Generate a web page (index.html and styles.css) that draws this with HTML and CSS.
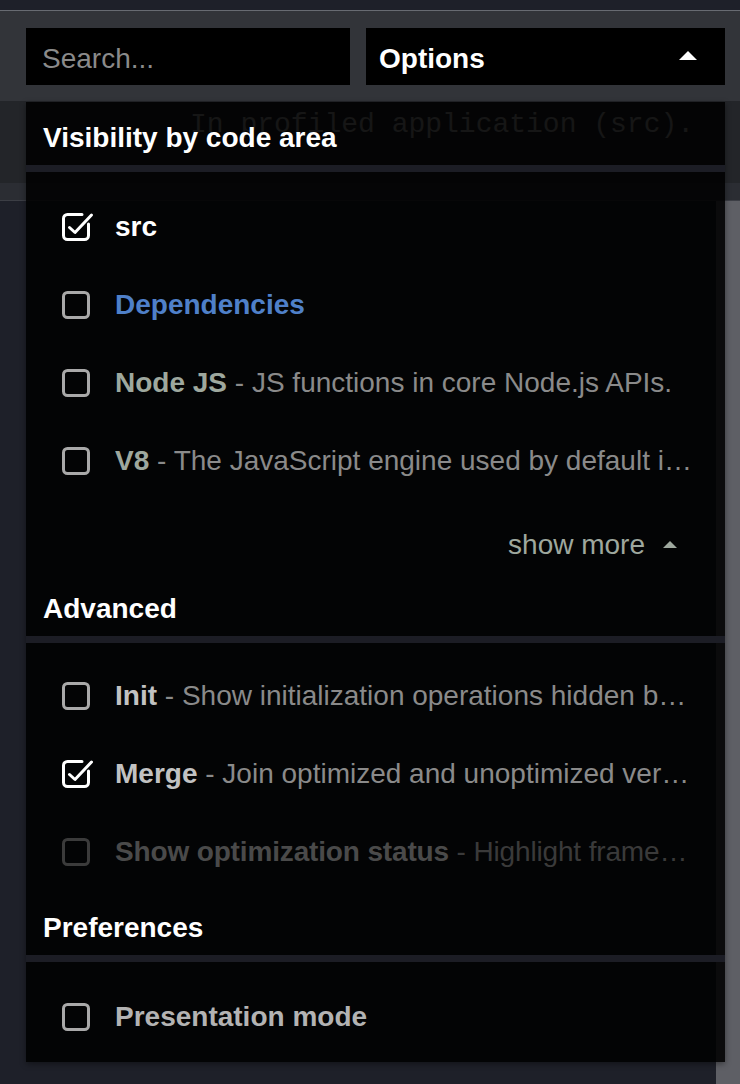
FILE: index.html
```html
<!DOCTYPE html>
<html>
<head>
<meta charset="utf-8">
<link rel="stylesheet" href="styles.css">
</head>
<body>
<div class="page">
  <div class="topstrip"></div>
  <div class="toolbar">
    <input class="search" type="text" placeholder="Search...">
    <button class="options-btn"><span>Options</span><span class="tri-up"></span></button>
  </div>
  <div class="infobar">
    <span class="info-text">In profiled application (src).</span>
  </div>
  <div class="subbar"></div>
  <div class="main">
    <div class="content"></div>
    <div class="scrollbar"></div>
  </div>

  <div class="panel">
    <div class="sec-title">Visibility by code area</div>
    <div class="sec-body first">
      <div class="row">
        <svg class="cb" width="28" height="28" viewBox="0 0 28 28"><path class="on" d="M20 1.5H5.5A4 4 0 0 0 1.5 5.5V22.5A4 4 0 0 0 5.5 26.5H22.5A4 4 0 0 0 26.5 22.5V11"/><path class="on" d="M7.5 14.5L13 19.5L29.5 2"/></svg>
        <span class="label"><b class="c-white">src</b></span>
      </div>
      <div class="row">
        <svg class="cb" width="28" height="28" viewBox="0 0 28 28"><rect class="off" x="1.5" y="1.5" width="25" height="25" rx="4"/></svg>
        <span class="label"><b class="c-blue">Dependencies</b></span>
      </div>
      <div class="row">
        <svg class="cb" width="28" height="28" viewBox="0 0 28 28"><rect class="off" x="1.5" y="1.5" width="25" height="25" rx="4"/></svg>
        <span class="label"><b class="c-green">Node JS</b><span class="desc"> - JS functions in core Node.js APIs.</span></span>
      </div>
      <div class="row">
        <svg class="cb" width="28" height="28" viewBox="0 0 28 28"><rect class="off" x="1.5" y="1.5" width="25" height="25" rx="4"/></svg>
        <span class="label"><b class="c-green">V8</b><span class="desc"> - The JavaScript engine used by default in Node.js.</span></span>
      </div>
      <div class="show-more"><span>show more</span><span class="tri-small"></span></div>
    </div>

    <div class="sec-title">Advanced</div>
    <div class="sec-body second">
      <div class="row">
        <svg class="cb" width="28" height="28" viewBox="0 0 28 28"><rect class="off" x="1.5" y="1.5" width="25" height="25" rx="4"/></svg>
        <span class="label"><b class="c-light">Init</b><span class="desc"> - Show initialization operations hidden by default.</span></span>
      </div>
      <div class="row">
        <svg class="cb" width="28" height="28" viewBox="0 0 28 28"><path class="on" d="M20 1.5H5.5A4 4 0 0 0 1.5 5.5V22.5A4 4 0 0 0 5.5 26.5H22.5A4 4 0 0 0 26.5 22.5V11"/><path class="on" d="M7.5 14.5L13 19.5L29.5 2"/></svg>
        <span class="label"><b class="c-light">Merge</b><span class="desc"> - Join optimized and unoptimized versions of frames.</span></span>
      </div>
      <div class="row disabled">
        <svg class="cb" width="28" height="28" viewBox="0 0 28 28"><rect class="dis" x="1.5" y="1.5" width="25" height="25" rx="4"/></svg>
        <span class="label tight"><b>Show optimization status</b><span class="desc"> - Highlight frames by optimization status.</span></span>
      </div>
    </div>

    <div class="sec-title">Preferences</div>
    <div class="sec-body third">
      <div class="row">
        <svg class="cb" width="28" height="28" viewBox="0 0 28 28"><rect class="off" x="1.5" y="1.5" width="25" height="25" rx="4"/></svg>
        <span class="label"><b class="c-pres">Presentation mode</b></span>
      </div>
    </div>
  </div>
</div>
</body>
</html>
```

FILE: styles.css
```css
html, body {
  margin: 0;
  padding: 0;
}
body {
  background: #1e2029;
  font-family: "Liberation Sans", Arial, sans-serif;
  width: 740px;
  height: 1084px;
  overflow: hidden;
}
.page {
  position: relative;
  width: 740px;
  height: 1084px;
  display: flex;
  flex-direction: column;
}
.topstrip {
  height: 10px;
  background: #1e2029;
  border-bottom: 1px solid #686b72;
}
.toolbar {
  height: 73px;
  padding: 17px 15px 0 26px;
  background: #323439;
  display: flex;
  gap: 16px;
}
.search {
  width: 324px;
  height: 57px;
  box-sizing: border-box;
  background: #000;
  border: none;
  outline: none;
  padding: 4px 16px 0;
  font-family: "Liberation Sans", Arial, sans-serif;
  font-size: 28px;
  color: #ddd;
}
.search::placeholder {
  color: #8a8a8a;
}
.options-btn {
  flex: 1;
  height: 57px;
  background: #000;
  border: none;
  padding: 4px 28px 0 13px;
  display: flex;
  align-items: center;
  justify-content: space-between;
  font-family: "Liberation Sans", Arial, sans-serif;
  font-size: 28px;
  font-weight: bold;
  color: #fff;
}
.tri-up {
  width: 0;
  height: 0;
  border-left: 9px solid transparent;
  border-right: 9px solid transparent;
  border-bottom: 9px solid #fff;
  margin-top: -6px;
}
.infobar {
  height: 82px;
  background: #232529;
  padding-left: 190px;
  display: flex;
  align-items: center;
}
.info-text {
  font-family: "Liberation Mono", "Courier New", monospace;
  font-size: 28px;
  color: #b0b0b0;
  margin-top: -36px;
}
.subbar {
  height: 17px;
  background: #2b2d33;
  border-bottom: 1px solid #3c3e45;
}
.main {
  flex: 1;
  display: flex;
}
.content {
  flex: 1;
  background: #1e2029;
}
.scrollbar {
  width: 24px;
  background: #5e5f65;
}

/* Dropdown panel overlay */
.panel {
  position: absolute;
  top: 102px;
  left: 26px;
  width: 699px;
  background: rgba(0, 0, 0, 0.88);
  box-shadow: 0 2px 6px rgba(0, 0, 0, 0.4);
}
.sec-title {
  height: 32px;
  padding: 20px 17px 11px;
  line-height: 32px;
  font-size: 28px;
  font-weight: bold;
  color: #fff;
  border-bottom: 7px solid rgba(30, 32, 40, 0.92);
}
.sec-body.first {
  padding-top: 16px;
}
.sec-body.second {
  padding-top: 14px;
  padding-bottom: 1px;
}
.sec-body.third {
  padding-top: 16px;
  padding-bottom: 6px;
}
.row {
  height: 78px;
  display: flex;
  align-items: center;
  padding: 0 33px 0 36px;
}
.cb {
  flex: none;
  overflow: visible;
  margin-right: 25px;
}
.cb .on {
  fill: none;
  stroke: #fff;
  stroke-width: 3;
  stroke-linecap: round;
  stroke-linejoin: round;
}
.cb .off {
  fill: none;
  stroke: #a9a9a9;
  stroke-width: 3;
}
.cb .dis {
  fill: none;
  stroke: #3b3b3b;
  stroke-width: 3;
}
.label {
  flex: 1;
  min-width: 0;
  white-space: nowrap;
  overflow: hidden;
  text-overflow: ellipsis;
  font-size: 28px;
  line-height: 34px;
  color: #8a8a8a;
}
.label.tight {
  letter-spacing: -0.15px;
}
.label b {
  font-weight: bold;
}
.c-white { color: #fff; }
.c-blue { color: #4f80c9; }
.c-green { color: #9ea89e; }
.c-light { color: #c2c2c2; }
.c-pres { color: #b3b3b3; }
.desc { color: #8a8a8a; }
.row.disabled .label { color: #3a3a3a; }
.row.disabled .label b { color: #4a4a4a; }
.row.disabled .desc { color: #3a3a3a; }

.show-more {
  height: 32px;
  padding: 29px 48px 12px 0;
  display: flex;
  justify-content: flex-end;
  align-items: center;
  gap: 18px;
  font-size: 28px;
  line-height: 32px;
  color: #9ea89e;
}
.tri-small {
  width: 0;
  height: 0;
  border-left: 7px solid transparent;
  border-right: 7px solid transparent;
  border-bottom: 7px solid #9ea89e;
  margin-top: -2px;
}
```
